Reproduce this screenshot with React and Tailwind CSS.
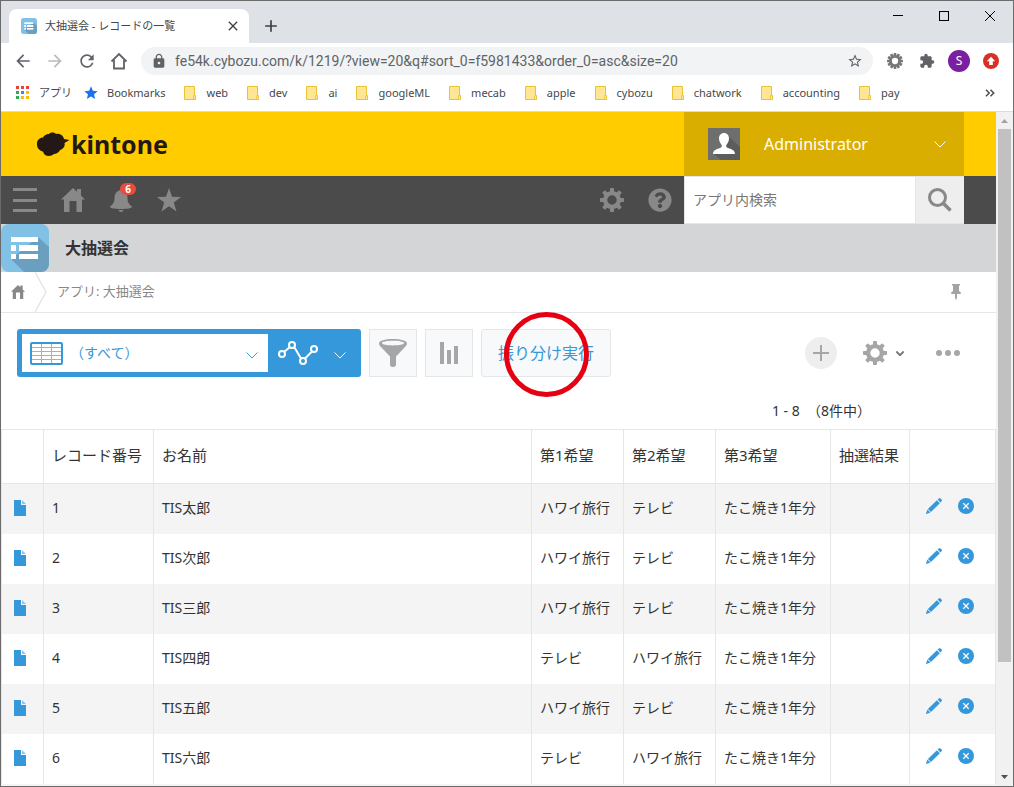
import React, { useState } from "react";
import {
  MdArrowBack,
  MdArrowForward,
  MdRefresh,
  MdLock,
  MdStarBorder,
  MdStar,
  MdExtension,
  MdClose,
  MdAdd,
} from "react-icons/md";
import { FaQuestionCircle } from "react-icons/fa";

const BOOKMARKS = [
  "web",
  "dev",
  "ai",
  "googleML",
  "mecab",
  "apple",
  "cybozu",
  "chatwork",
  "accounting",
  "pay",
];

const RECORDS = [
  { id: 1, name: "TIS太郎", first: "ハワイ旅行", second: "テレビ", third: "たこ焼き1年分", result: "" },
  { id: 2, name: "TIS次郎", first: "ハワイ旅行", second: "テレビ", third: "たこ焼き1年分", result: "" },
  { id: 3, name: "TIS三郎", first: "ハワイ旅行", second: "テレビ", third: "たこ焼き1年分", result: "" },
  { id: 4, name: "TIS四朗", first: "テレビ", second: "ハワイ旅行", third: "たこ焼き1年分", result: "" },
  { id: 5, name: "TIS五郎", first: "ハワイ旅行", second: "テレビ", third: "たこ焼き1年分", result: "" },
  { id: 6, name: "TIS六郎", first: "テレビ", second: "ハワイ旅行", third: "たこ焼き1年分", result: "" },
];

const APP_GRID = [
  "#ea4335", "#ea4335", "#ea4335",
  "#34a853", "#4285f4", "#fbbc04",
  "#34a853", "#fbbc04", "#fbbc04",
];

/* ---------- icons ---------- */

const Gear = ({ className, teeth = 8 }) => (
  <svg viewBox="0 0 24 24" className={className} aria-hidden="true">
    <circle cx="12" cy="12" r="6.9" fill="none" stroke="currentColor" strokeWidth="4.4" />
    {Array.from({ length: teeth }, (_, i) => (
      <rect
        key={i}
        x="10"
        y="0"
        width="4"
        height="5"
        rx="0.8"
        fill="currentColor"
        transform={`rotate(${(360 / teeth) * i} 12 12)`}
      />
    ))}
  </svg>
);

const House = ({ className }) => (
  <svg viewBox="0 0 24 24" className={className} aria-hidden="true">
    <path
      fill="currentColor"
      d="M12 0l4 3.8V1h4v6.6l4 4h-3V24h-5.5V13h-7v11H3V11.600H0z"
    />
  </svg>
);

const Chevron = ({ className, width = 1 }) => (
  <svg viewBox="0 0 12 7" className={className} aria-hidden="true">
    <path d="M0.500 0.500L6 6l5.500-5.500" fill="none" stroke="currentColor" strokeWidth={width} />
  </svg>
);

const AppIcon = ({ className }) => (
  <svg viewBox="0 0 48 48" className={className} aria-hidden="true">
    <defs>
      <clipPath id="app-icon-clip">
        <rect width="48" height="48" rx="8" />
      </clipPath>
    </defs>
    <g clipPath="url(#app-icon-clip)">
      <rect width="48" height="48" fill="#82c1e6" />
      <path d="M37 13l11 10v25H23L10 35z" fill="#6a9fc0" />
    </g>
    <g fill="#fff">
      <rect x="10" y="13" width="27" height="5" />
      <rect x="10" y="21" width="5" height="6" />
      <rect x="18" y="21" width="19" height="6" />
      <rect x="10" y="30" width="5" height="5" />
      <rect x="18" y="30" width="19" height="5" />
    </g>
  </svg>
);

const Folder = () => (
  <svg viewBox="0 0 16 16" className="size-4" aria-hidden="true">
    <path d="M2.500 1.500h10v9h1v4h-11z" fill="#ffe694" stroke="#e9c235" />
    <path d="M11.500 14.500v-3.500l1-1 1 1v3.500z" fill="#ffe694" stroke="#e9c235" strokeWidth="0.8" />
  </svg>
);

const KintoneCloud = () => (
  <svg viewBox="0 0 34 25" className="h-[25px] w-[34px]" aria-hidden="true">
    <path
      fill="#231815"
      d="M1 11.500C1 8 4 5.500 7 5.500 8.500 2.500 12 2 13 2c2-2 5-1.700 7 0 4-1 7.500 2 8 5l5.500 1-5 3c1 3-1.500 6.500-4.500 7-1.500 3.500-5 4-6 4-3 3-10 3-11-2.500C3.500 19 .5 15.500 1 11.500z"
    />
  </svg>
);

const Avatar = () => (
  <svg viewBox="0 0 32 32" className="size-8" aria-hidden="true">
    <rect width="32" height="32" fill="#6e6e6e" />
    <path d="M19 7l13 12v13H13l-7-6 12-6z" fill="#5c5c5c" />
    <path
      fill="#fff"
      d="M16 5c3 0 5 2.300 5 5.500 0 3-1.500 5-2.700 6.500-.4 1.500.2 2.500 1.700 3 3 1 7 2 7 6H5c0-4 4-5 7-6 1.500-.5 2.100-1.500 1.700-3C12.500 15.500 11 13.500 11 10.500 11 7.300 13 5 16 5z"
    />
  </svg>
);

const Bell = () => (
  <svg viewBox="0 0 24 24" className="size-6" aria-hidden="true">
    <path
      fill="currentColor"
      d="M10.500 2.500c0-2 3-2 3 0 3.500 1 5 3.500 5 7.500 0 4.500 1.500 6 4.500 8.700 0 1.300-4 2.300-11 2.300S1 20 1 18.700C4 16 5.500 14.500 5.500 10c0-4 1.500-6.500 5-7.500zM9.500 22h5c-.5 2.600-4.500 2.600-5 0z"
    />
  </svg>
);

const Funnel = () => (
  <svg viewBox="0 0 28 28" className="size-7" aria-hidden="true">
    <path
      fill="currentColor"
      fillRule="evenodd"
      d="M14 0c8 0 14 1.700 14 4.200 0 1.500-.8 2.600-2 3.800L17 17.500V26c0 2.500-6 2.500-6 0v-8.500L2 8C.800 6.800 0 5.700 0 4.200 0 1.700 6 0 14 0zm0 1.800c-6 0-11 .9-11 2.300s5 2.400 11 2.400 11-1 11-2.400-5-2.300-11-2.300z"
    />
  </svg>
);

const Pin = () => (
  <svg viewBox="0 0 10 16" className="h-4 w-[10px]" aria-hidden="true">
    <path fill="#a3a3a3" d="M1 0h8v1.500H8V7l1.800 1.500V10H6v4l-1 2-1-2v-4H.200V8.500L2 7V1.500H1z" />
  </svg>
);

const Pencil = () => (
  <svg viewBox="0 0 16 16" className="size-4" aria-hidden="true">
    <path
      fill="currentColor"
      d="M12.800 .500c.5-.5 1.200-.5 1.700 0l1.100 1.100c.5.500.5 1.100 0 1.600L14.400 4.400 11.600 1.600zM10.900 2.200l3 3-9 8.800-3-3zM1.400 11.600l3 3L.4 15.900l-.4-.4z"
    />
  </svg>
);

const Delete = () => (
  <svg viewBox="0 0 16 16" className="size-4" aria-hidden="true">
    <circle cx="8" cy="8" r="8" fill="currentColor" />
    <path d="M5.300 5.300l5.400 5.400M10.700 5.300l-5.400 5.400" stroke="#fff" strokeWidth="1.300" />
  </svg>
);

const Document = () => (
  <svg viewBox="0 0 12 16" className="h-4 w-3" aria-hidden="true">
    <path fill="#3498db" d="M0 0h7v5h5v11H0z" />
    <path fill="#8fc5ec" d="M8 0l4 4H8z" />
  </svg>
);

/* ---------- browser chrome ---------- */

const TabStrip = () => (
  <div className="flex h-[42px] flex-none bg-[#dee1e6]">
    <div className="mt-2 ml-2 flex w-60 items-center rounded-t-lg bg-white pr-2 pl-3">
      <AppIcon className="size-4" />
      <span className="ml-2 flex-1 truncate text-[11px] text-[#45494d]">大抽選会 - レコードの一覧</span>
      <button type="button" aria-label="タブを閉じる" className="text-[#3c4043]">
        <MdClose className="size-4" />
      </button>
    </div>
    <button type="button" aria-label="新しいタブ" className="mt-2 ml-3 text-[#3c4043]">
      <MdAdd className="size-5" />
    </button>
    <div className="ml-auto flex h-[29px]">
      <button type="button" aria-label="最小化" className="flex w-[46px] items-center justify-center">
        <span className="h-px w-[10px] bg-black" />
      </button>
      <button type="button" aria-label="最大化" className="flex w-[46px] items-center justify-center">
        <span className="size-[10px] border border-black" />
      </button>
      <button type="button" aria-label="閉じる" className="flex w-[46px] items-center justify-center">
        <svg viewBox="0 0 10 10" className="size-[10px]" aria-hidden="true">
          <path d="M0 0l10 10M10 0L0 10" stroke="#000" />
        </svg>
      </button>
    </div>
  </div>
);

const AddressBar = () => (
  <div className="flex h-9 flex-none items-center bg-white pl-1.5 text-[#5f6368]">
    <button type="button" aria-label="戻る" className="flex w-8 justify-center">
      <MdArrowBack className="size-5" />
    </button>
    <button type="button" aria-label="進む" className="flex w-8 justify-center text-[#b9bbbe]">
      <MdArrowForward className="size-5" />
    </button>
    <button type="button" aria-label="再読み込み" className="flex w-8 justify-center">
      <MdRefresh className="size-5" />
    </button>
    <button type="button" aria-label="ホーム" className="flex w-8 justify-center">
      <svg viewBox="0 0 18 18" className="size-[18px]" aria-hidden="true">
        <path
          d="M1.500 9.500L9 2l7.500 7.500M4 8v8.500h10V8"
          fill="none"
          stroke="currentColor"
          strokeWidth="1.800"
        />
      </svg>
    </button>
    <div className="ml-1.5 flex h-7 flex-1 items-center rounded-full bg-[#f1f3f4] px-[10px]">
      <MdLock className="size-4" />
      <input
        type="text"
        aria-label="アドレス"
        defaultValue="fe54k.cybozu.com/k/1219/?view=20&q#sort_0=f5981433&order_0=asc&size=20"
        className="ml-2 h-6 min-w-0 flex-1 bg-transparent font-['Roboto','Noto_Sans_CJK_JP',sans-serif] text-sm text-[#5f6368]"
      />
      <button type="button" aria-label="ブックマークに追加">
        <MdStarBorder className="size-4" />
      </button>
    </div>
    <div className="ml-1.5 flex items-center pr-1.5">
      <button type="button" aria-label="拡張機能の設定" className="flex w-8 justify-center text-[#777]">
        <Gear className="size-4" teeth={12} />
      </button>
      <button type="button" aria-label="拡張機能" className="flex w-8 justify-center">
        <MdExtension className="size-4" />
      </button>
      <button type="button" aria-label="プロフィール" className="flex w-8 justify-center">
        <span className="flex size-[22px] items-center justify-center rounded-full bg-[#7b1fa2] text-xs text-white">
          S
        </span>
      </button>
      <button type="button" aria-label="更新" className="flex w-8 justify-center">
        <svg viewBox="0 0 16 16" className="size-4" aria-hidden="true">
          <circle cx="8" cy="8" r="8" fill="#d93025" />
          <path d="M8 3.800l4.200 4.400H9.800V12H6.200V8.200H3.800z" fill="#fff" />
        </svg>
      </button>
    </div>
  </div>
);

const BookmarkBar = () => (
  <nav
    aria-label="ブックマーク"
    className="flex h-[33px] flex-none items-center gap-[17px] border-b border-[#dadce0] bg-white pb-1 pl-[14px] pr-[18px] text-[11px] whitespace-nowrap text-[#45484c]"
  >
    <a href="#apps" className="flex w-[51px] items-center gap-2">
      <svg viewBox="0 0 16 16" className="size-4 flex-none" aria-hidden="true">
        {APP_GRID.map((fill, i) => (
          <rect key={i} x={1 + (i % 3) * 5} y={1 + Math.floor(i / 3) * 5} width="3" height="3" fill={fill} />
        ))}
      </svg>
      アプリ
    </a>
    <a href="#bookmarks" className="flex items-center gap-2">
      <MdStar className="size-4 text-[#1a73e8]" />
      Bookmarks
    </a>
    {BOOKMARKS.map((name) => (
      <a key={name} href={`#${name}`} className="flex items-center gap-2">
        <Folder />
        {name}
      </a>
    ))}
    <button type="button" aria-label="その他のブックマーク" className="ml-auto">
      <svg viewBox="0 0 10 8" className="h-2 w-[10px]" aria-hidden="true">
        <path d="M1 .800L4.200 4 1 7.200M5.500.800L8.700 4 5.500 7.200" fill="none" stroke="#4a4d51" strokeWidth="1.500" />
      </svg>
    </button>
  </nav>
);

const Scrollbar = () => (
  <div className="flex w-[17px] flex-none flex-col items-center bg-[#f1f1f1]" aria-hidden="true">
    <svg viewBox="0 0 17 17" className="size-[17px] flex-none">
      <path d="M5 11l3.500-4 3.500 4z" fill="#a3a3a3" />
    </svg>
    <div className="h-[533px] w-[13px] bg-[#c1c1c1]" />
    <svg viewBox="0 0 17 17" className="mt-auto size-[17px] flex-none">
      <path d="M5 6l3.500 4L12 6z" fill="#505050" />
    </svg>
  </div>
);

/* ---------- kintone ---------- */

const Header = () => (
  <header className="flex h-16 flex-none items-center bg-[#ffcc00] pr-8">
    <a href="#top" className="ml-[35px] flex items-center gap-px text-[#231815]">
      <KintoneCloud />
      <span className="text-[25px] leading-6 font-bold">kintone</span>
    </a>
    <button
      type="button"
      className="ml-auto flex h-full w-70 items-center bg-[#d9ae00] px-6 text-base text-white"
    >
      <Avatar />
      <span className="ml-6">Administrator</span>
      <Chevron className="mr-[-6px] ml-auto h-[7px] w-3" />
    </button>
  </header>
);

const GlobalNav = () => (
  <nav aria-label="メイン" className="flex h-12 flex-none bg-[#4b4b4b] pr-8 text-[#888888]">
    <button type="button" aria-label="メニュー" className="flex w-12 items-center justify-center">
      <span className="flex h-6 w-6 flex-col justify-between">
        <span className="h-[3px] bg-current" />
        <span className="h-[3px] bg-current" />
        <span className="h-[3px] bg-current" />
      </span>
    </button>
    <a href="#home" aria-label="ホーム" className="flex w-12 items-center justify-center">
      <House className="size-6" />
    </a>
    <button type="button" aria-label="通知" className="relative flex w-12 items-center justify-center">
      <Bell />
      <span className="absolute top-[7px] right-[9px] flex h-3 w-4 items-center justify-center rounded-full bg-[#e74c3c] text-[10px] leading-3 font-bold text-white">
        6
      </span>
    </button>
    <button type="button" aria-label="お気に入り" className="flex w-12 items-center justify-center">
      <svg viewBox="0 0 24 24" className="size-6" aria-hidden="true">
        <path fill="currentColor" d="M12 0l3 8.700 9 .2-7.200 5.500L19.500 23.500 12 18.200 4.500 23.500l2.700-9.100L0 8.900l9-.2z" />
      </svg>
    </button>
    <button type="button" aria-label="設定" className="ml-auto flex w-12 items-center justify-center">
      <Gear className="size-6" />
    </button>
    <button type="button" aria-label="ヘルプ" className="flex w-12 items-center justify-center">
      <FaQuestionCircle className="size-6" />
    </button>
    <form className="flex w-70" onSubmit={(e) => e.preventDefault()}>
      <input
        type="text"
        aria-label="アプリ内検索"
        placeholder="アプリ内検索"
        className="min-w-0 flex-1 border border-[#e3e7e8] bg-white px-2 text-sm text-[#333] placeholder:text-[#777]"
      />
      <button
        type="submit"
        aria-label="検索"
        className="flex w-12 items-center justify-center border-y border-[#e3e7e8] bg-[#eeeeee]"
      >
        <svg viewBox="0 0 24 24" className="size-6" aria-hidden="true">
          <circle cx="9.500" cy="9.500" r="8" fill="none" stroke="currentColor" strokeWidth="3" />
          <path d="M15 15l7.500 7.500" stroke="currentColor" strokeWidth="3.500" />
        </svg>
      </button>
    </form>
  </nav>
);

const AppTitle = () => (
  <div className="flex h-12 flex-none items-center gap-4 bg-[#d4d5d7]">
    <AppIcon className="size-12" />
    <h1 className="text-base font-bold text-[#333]">大抽選会</h1>
  </div>
);

const Breadcrumb = () => (
  <nav
    aria-label="パンくず"
    className="flex h-[41px] flex-none items-center border-b border-[#e3e7e8] pr-[35px] pl-[10px] text-[13px] text-[#888888]"
  >
    <a href="#home" aria-label="ホーム">
      <House className="size-[14px]" />
    </a>
    <svg viewBox="0 0 12 40" className="ml-[10px] h-10 w-3" aria-hidden="true">
      <path d="M0 0l11 20L0 40" fill="none" stroke="#e3e7e8" strokeWidth="1.500" />
    </svg>
    <a href="#app" className="ml-[10px]">アプリ: 大抽選会</a>
    <button type="button" aria-label="固定" className="ml-auto">
      <Pin />
    </button>
  </nav>
);

const Toolbar = () => {
  const [view, setView] = useState("all");

  return (
    <div className="flex flex-none items-center gap-2 px-4 pt-4 pr-9">
      <div className="flex h-12 w-[344px] rounded-[3px] bg-[#3498db] p-[5px] text-[#3498db]">
        <div className="relative flex w-[246px] items-center bg-white">
          <svg viewBox="0 0 33 23" className="pointer-events-none absolute left-2 h-[23px] w-[33px]" aria-hidden="true">
            <path d="M1 5.500h31M1 9.500h31M1 13.500h31M1 17.500h31M11.500 1v21M21.500 1v21" stroke="#7fbde8" />
            <rect x="1" y="1" width="31" height="21" rx="1" fill="none" stroke="currentColor" strokeWidth="2" />
          </svg>
          <select
            aria-label="一覧"
            value={view}
            onChange={(e) => setView(e.target.value)}
            className="h-full w-full appearance-none bg-transparent pr-8 pl-12 text-sm"
          >
            <option value="all">（すべて）</option>
          </select>
          <Chevron className="pointer-events-none absolute right-[10px] mt-1 h-[7px] w-3" />
        </div>
        <button type="button" aria-label="グラフ" className="flex flex-1 items-center gap-4 pl-[10px] text-white">
          <svg viewBox="0 0 40 24" className="h-6 w-10" aria-hidden="true">
            <g fill="none" stroke="currentColor" strokeWidth="2">
              <path d="M6 11l6-5M16.500 6.500l6.500 11M27 17.500l7-7" />
              <circle cx="4" cy="13" r="3" />
              <circle cx="14" cy="4" r="3" />
              <circle cx="25" cy="20" r="3" />
              <circle cx="36" cy="8" r="3" />
            </g>
          </svg>
          <Chevron className="mt-1 h-[7px] w-3" />
        </button>
      </div>

      <button
        type="button"
        aria-label="絞り込む"
        className="flex size-12 items-center justify-center border border-[#e3e7e8] bg-[#f7f9fa] text-[#a6a6a6]"
      >
        <Funnel />
      </button>
      <button
        type="button"
        aria-label="集計する"
        className="flex size-12 items-center justify-center border border-[#e3e7e8] bg-[#f7f9fa]"
      >
        <svg viewBox="0 0 18 22" className="h-[22px] w-[18px]" aria-hidden="true">
          <path d="M0 0h4v22H0zM7 8h4v14H7zM14 4h4v18h-4z" fill="#a6a6a6" />
        </svg>
      </button>
      <div className="relative">
        <button
          type="button"
          className="h-12 rounded-[3px] border border-[#e3e7e8] bg-[#f7f9fa] px-4 text-base whitespace-nowrap text-[#3498db]"
        >
          振り分け実行
        </button>
        {/* highlight ring */}
        <span className="pointer-events-none absolute top-[-17px] left-[23px] size-[85px] rounded-full border-5 border-[#e60012]" />
      </div>

      <div className="ml-auto flex items-center text-[#a6a6a6]">
        <button
          type="button"
          aria-label="レコードを追加する"
          className="flex size-8 items-center justify-center rounded-full bg-[#eeeeee]"
        >
          <svg viewBox="0 0 16 16" className="size-4" aria-hidden="true">
            <path d="M8 0v16M0 8h16" stroke="currentColor" strokeWidth="2" />
          </svg>
        </button>
        <button type="button" aria-label="アプリの設定" className="ml-[26px] flex items-center gap-[9px]">
          <Gear className="size-6" />
          <Chevron className="h-[5px] w-2 text-[#777]" width={3} />
        </button>
        <button type="button" aria-label="オプション" className="ml-8 flex gap-[3px]">
          <span className="size-[6px] rounded-full bg-current" />
          <span className="size-[6px] rounded-full bg-current" />
          <span className="size-[6px] rounded-full bg-current" />
        </button>
      </div>
    </div>
  );
};

const headCell = "border-y border-r border-[#e3e7e8] px-2 pb-0.5 text-left text-[15px] font-normal whitespace-nowrap";
const bodyCell = "border-r border-[#e3e7e8] px-2 pb-0.5 whitespace-nowrap";

const RecordTable = () => (
  <table className="w-full flex-none table-fixed border-separate border-spacing-0 border-l border-[#e3e7e8] text-sm text-[#333]">
    <colgroup>
      <col className="w-[42px]" />
      <col className="w-[110px]" />
      <col />
      <col className="w-[92px]" />
      <col className="w-[92px]" />
      <col className="w-[115px]" />
      <col className="w-[79px]" />
      <col className="w-[86px]" />
    </colgroup>
    <thead>
      <tr className="h-[55px]">
        <td className={headCell} />
        <th scope="col" className={headCell}>レコード番号</th>
        <th scope="col" className={headCell}>お名前</th>
        <th scope="col" className={headCell}>第1希望</th>
        <th scope="col" className={headCell}>第2希望</th>
        <th scope="col" className={headCell}>第3希望</th>
        <th scope="col" className={headCell}>抽選結果</th>
        <td className={headCell} />
      </tr>
    </thead>
    <tbody>
      {RECORDS.map((record) => (
        <tr key={record.id} className="h-[50px] odd:bg-[#f4f4f4]">
          <td className="border-r border-[#e3e7e8] pb-0.5 pl-3">
            <a href={`#record-${record.id}`} aria-label="レコードの詳細" className="block w-3">
              <Document />
            </a>
          </td>
          <td className={bodyCell}>{record.id}</td>
          <td className={bodyCell}>{record.name}</td>
          <td className={bodyCell}>{record.first}</td>
          <td className={bodyCell}>{record.second}</td>
          <td className={bodyCell}>{record.third}</td>
          <td className={bodyCell}>{record.result}</td>
          <td className="border-r border-[#e3e7e8] pb-1.5 pl-4">
            <div className="flex gap-4 text-[#3498db]">
              <button type="button" aria-label="編集">
                <Pencil />
              </button>
              <button type="button" aria-label="削除">
                <Delete />
              </button>
            </div>
          </td>
        </tr>
      ))}
    </tbody>
  </table>
);

const App = () => (
  <div className="flex h-screen flex-col overflow-hidden border border-[#6b6b6b] bg-white font-['Noto_Sans','Noto_Sans_CJK_JP',sans-serif]">
    <TabStrip />
    <AddressBar />
    <BookmarkBar />
    <div className="flex min-h-0 flex-1">
      <div className="flex min-w-0 flex-1 flex-col overflow-hidden">
        <Header />
        <GlobalNav />
        <AppTitle />
        <Breadcrumb />
        <main className="flex min-h-0 flex-1 flex-col">
          <Toolbar />
          <p className="flex h-[52px] flex-none items-center justify-end pt-4 pr-[125px] text-sm whitespace-pre text-[#333]">
            1 - 8  （8件中）
          </p>
          <RecordTable />
          <div className="flex-1 bg-[#f4f4f4]" />
        </main>
      </div>
      <Scrollbar />
    </div>
  </div>
);

export default App;
